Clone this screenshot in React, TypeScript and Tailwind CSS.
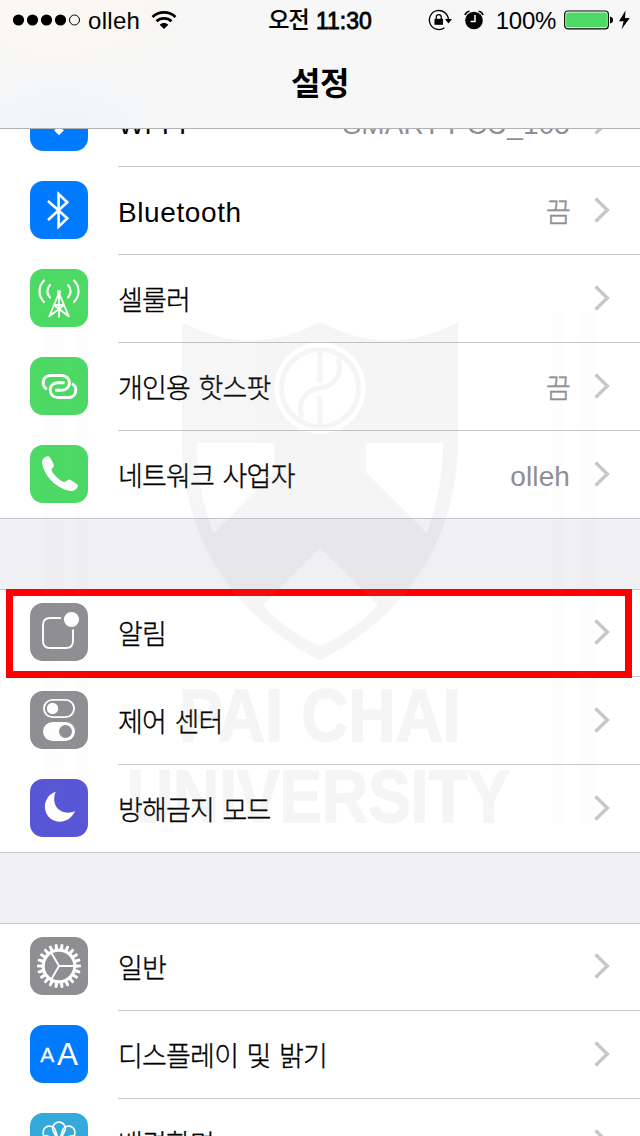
import type { ReactNode } from "react";

const FONT = "font-['Liberation_Sans','Noto_Sans_CJK_KR',sans-serif]";

function Tile({ color, children }: { color: string; children: ReactNode }) {
  return (
    <svg viewBox="0 0 58 58" className={`size-[58px] rounded-[13px] ${color}`} fill="none" stroke="white">
      {children}
    </svg>
  );
}

const wifi = (
  <Tile color="bg-[#007aff]">
    <path d="M29 42.300l-5-5c2.600-2.800 7.400-2.800 10 0z" fill="white" stroke="none" />
    <path d="M18.500 31.500c6-6 15-6 21 0M12.500 25.500c9-9 24-9 33 0" strokeWidth="4" />
  </Tile>
);

const bluetooth = (
  <Tile color="bg-[#007aff]">
    <path d="M18 20L37.300 37.300L28.600 45.600V13L37.300 21.300L18 39" strokeWidth="2.600" />
  </Tile>
);

const cellular = (
  <Tile color="bg-[#4cd964]">
    <g strokeWidth="2.200" strokeLinecap="round">
      <path d="M14 11.500c-6 6-6 15.500 0 21.500M44 11.500c6 6 6 15.500 0 21.500M20 16c-3.500 3.500-3.500 9 0 12.500M38 16c3.500 3.500 3.500 9 0 12.500" />
    </g>
    <path d="M29 24L19 48M29 24L39 48M29 23V48.500M24.500 36H33.500M19 47.500L33 37M39 47.500L25 37" strokeWidth="1.800" />
    <circle cx="29" cy="23" r="2" fill="white" stroke="none" />
  </Tile>
);

const hotspot = (
  <Tile color="bg-[#4cd964]">
    <g strokeWidth="2.900">
      <path d="M17 32.300C10.500 28.500 12.500 18.500 21 18.500H31.500C42 18.500 42 33.300 31.500 33.300H25" />
      <path d="M34.500 25.700H28C17.500 25.700 17.500 40.500 28 40.500H38C46.500 40.500 48.500 30.500 42 26.700" />
    </g>
  </Tile>
);

const phone = (
  <Tile color="bg-[#4cd964]">
    <path
      d="M18.500 11.200C16 10.600 11.600 14 12 17.200C13.500 31 27 43.800 40.500 46C44 46.500 47.700 43.500 48 40.500C48 39.700 41.200 35 39.300 34.500C38 34.200 35.300 37.300 33.500 37C30.500 36.300 22.200 28.200 21.600 25.300C21.300 23.800 24.200 21.500 24 20.200C23.700 18.500 20 11.500 18.500 11.200Z"
      fill="white"
      stroke="none"
    />
  </Tile>
);

const notification = (
  <Tile color="bg-[#8e8e93]">
    <path d="M31 15H20Q13 15 13 22V38Q13 45 20 45H36Q43 45 43 38V26.500" strokeWidth="1.900" />
    <circle cx="41.500" cy="16.500" r="7.600" fill="white" stroke="none" />
  </Tile>
);

const control = (
  <Tile color="bg-[#8e8e93]">
    <rect x="13.900" y="8.900" width="30.200" height="17.200" rx="8.600" strokeWidth="1.800" />
    <circle cx="22.500" cy="17.500" r="5.700" fill="white" stroke="none" />
    <rect x="13" y="31" width="32" height="19" rx="9.500" fill="white" stroke="none" />
    <circle cx="35.500" cy="40.500" r="6.500" fill="#8e8e93" stroke="none" />
  </Tile>
);

const moon = (
  <Tile color="bg-[#5856d6]">
    <path d="M25.700 12.800C12 17 11 37 25 42C34 44.500 42 39.500 45 32C34 37.500 19.500 29 25.700 12.800Z" fill="white" stroke="none" />
  </Tile>
);

const general = (
  <Tile color="bg-[#8e8e93]">
    <circle cx="29" cy="29" r="15.700" strokeWidth="2.900" />
    {Array.from({ length: 22 }, (_, i) => (
      <path
        key={i}
        d="M45.300 27.200L51 27.700V30.300L45.300 30.800Z"
        fill="white"
        stroke="none"
        transform={`rotate(${(i * 360) / 22} 29 29)`}
      />
    ))}
    <path d="M29 29H44M29 29L21.500 16M29 29L21.500 42" strokeWidth="1.900" />
  </Tile>
);

const display = (
  <Tile color="bg-[#007aff]">
    <g fill="white" stroke="none" className="font-['Liberation_Sans',sans-serif]">
      <text x="10.200" y="37.400" fontSize="21" stroke="white" strokeWidth="0.300">A</text>
      <text x="27" y="39.700" fontSize="31.500">A</text>
    </g>
  </Tile>
);

const wallpaper = (
  <Tile color="bg-[#34aadc]">
    <g strokeWidth="1.700">
      {Array.from({ length: 8 }, (_, i) => (
        <path key={i} d="M29 29L23.800 19A6.300 6.300 0 1 1 34.200 19Z" transform={`rotate(${i * 45} 29 29)`} />
      ))}
    </g>
  </Tile>
);

function Chevron() {
  return (
    <svg viewBox="0 0 18 28" className="mr-[30px] ml-[22px] h-7 w-[18px] -translate-y-px shrink-0" fill="none">
      <path d="M3.500 2.500L15.300 14L3.500 25.500" stroke="#c7c7cc" strokeWidth="3.500" />
    </svg>
  );
}

type Item = { icon: ReactNode; label: string; value?: string };

const LATIN_LABEL = "pt-[5px] text-[28px] tracking-[0.6px]";
const LATIN_VALUE = "pt-[5px] text-[28px] tracking-[0.1px]";
const HANGUL_TEXT = "pt-[6px] text-[27px] font-light tracking-[-0.8px] [word-spacing:1.7px] [-webkit-text-stroke:0.35px_currentColor]";

const isLatin = (text: string) => /^[\x20-\x7e]+$/.test(text);

function Row({ icon, label, value, last }: Item & { last: boolean }) {
  return (
    <div className={`flex h-[88px] shrink-0 bg-white ${last ? "border-b border-[#c8c7cc]" : ""}`}>
      <div className="w-[118px] shrink-0 pt-[14px] pl-[30px]">{icon}</div>
      <div className={`flex flex-1 items-center whitespace-nowrap ${last ? "" : "border-b border-[#c8c7cc]"}`}>
        <span className={`flex-1 text-black ${isLatin(label) ? LATIN_LABEL : HANGUL_TEXT}`}>{label}</span>
        {value && <span className={`text-[#8e8e93] ${isLatin(value) ? LATIN_VALUE : HANGUL_TEXT}`}>{value}</span>}
        <Chevron />
      </div>
    </div>
  );
}

const groups: Item[][] = [
  [
    { icon: wifi, label: "Wi-Fi", value: "SMART PCU_105" },
    { icon: bluetooth, label: "Bluetooth", value: "끔" },
    { icon: cellular, label: "셀룰러" },
    { icon: hotspot, label: "개인용 핫스팟", value: "끔" },
    { icon: phone, label: "네트워크 사업자", value: "olleh" },
  ],
  [
    { icon: notification, label: "알림" },
    { icon: control, label: "제어 센터" },
    { icon: moon, label: "방해금지 모드" },
  ],
  [
    { icon: general, label: "일반" },
    { icon: display, label: "디스플레이 및 밝기" },
    { icon: wallpaper, label: "배경화면" },
  ],
];

function StatusBar() {
  return (
    <div className="flex h-10 items-center justify-between pr-[8px] pl-[13px] text-[24px] text-black">
      <div className="flex w-[240px] items-center">
        <svg viewBox="0 0 68 12" className="h-3 w-[68px]">
          {[5.5, 19.5, 33.5, 47.5].map((x) => (
            <circle key={x} cx={x} cy="6" r="5.600" />
          ))}
          <circle cx="61.500" cy="6" r="5" fill="none" stroke="black" />
        </svg>
        <span className="ml-[7px] pt-[2px] tracking-[0.3px]">olleh</span>
        <svg viewBox="0 0 26 20" className="ml-[11px] h-5 w-[26px]" fill="none" stroke="black" strokeWidth="2.800">
          <path d="M1.500 7C8 .9 18 .9 24.500 7M5.500 11.300C9.500 7.500 16.500 7.500 20.500 11.300" />
          <path d="M13 19L8.700 14.800C11 12.500 15 12.500 17.300 14.800Z" fill="black" stroke="none" />
        </svg>
      </div>
      <div className="-ml-[5px] flex items-center gap-[7px]">
        <span className="pt-px text-[23px] font-medium tracking-[-0.8px] [-webkit-text-stroke:0.2px_black]">오전</span>
        <span className="pt-[2px] text-[23px] tracking-[0px] [-webkit-text-stroke:0.8px_black]">11:30</span>
      </div>
      <div className="flex w-[240px] items-center justify-end">
        <svg viewBox="0 0 24 22" className="h-[22px] w-6" fill="none" stroke="black">
          <path d="M16.500 18.700A9.500 9.500 0 1 1 20.400 11" strokeWidth="1.300" />
          <path d="M17 10H24L20.500 14.500Z" fill="black" stroke="none" />
          <rect x="6.500" y="9.800" width="8.500" height="6" fill="black" stroke="none" />
          <path d="M8.300 10V8C8.300 4.800 13.200 4.800 13.200 8V10" strokeWidth="1.300" />
        </svg>
        <svg viewBox="0 0 20 20" className="ml-3 size-5">
          <circle cx="10" cy="10.500" r="8.800" />
          <path d="M1 5C1.500 3 3.500 1.500 5.500 1.200M19 5C18.500 3 16.500 1.500 14.500 1.200" fill="none" stroke="black" strokeWidth="1.600" />
          <path d="M11 5V11.500H6.500" fill="none" stroke="white" strokeWidth="1.500" />
        </svg>
        <span className="ml-3 pt-[2px] text-[24px] tracking-[-0.3px]">100%</span>
        <svg viewBox="0 0 68 22" className="ml-2 h-[22px] w-[68px]">
          <rect x=".7" y="2" width="43.600" height="17.800" rx="3" fill="white" stroke="black" strokeWidth="1.200" />
          <rect x="2.100" y="3.500" width="40.800" height="14.800" rx="1.500" fill="#4cd964" />
          <path d="M46 7.500Q49 8 49 11Q49 14 46 14.500Z" />
          <path d="M61.500 1.500L55 12.200H59.700L57.500 20.200L65.800 9H61Z" />
        </svg>
      </div>
    </div>
  );
}

function Watermark() {
  return (
    <svg viewBox="0 0 640 1136" className="pointer-events-none absolute inset-0 z-20 h-full w-full">
      <g fill="#909090" fillOpacity="0.02">
        <path d="M45 312H63V824H45ZM77 312H87V824H77ZM553 312H563V824H553ZM577.500 312H596V824H577.500Z" />
      </g>
      <g fill="#909090" opacity="0.082">
        <path
          fillRule="evenodd"
          d="M182 322Q251 359 320 322Q389 359 458 322V440C458 535 410 614 320 660.500C230 614 182 535 182 440ZM196.700 443H274.500V472L213.700 533.500C203 507 197 475 196.700 443ZM443.300 443H366V472.500L426.500 533C437 507 443 475 443.300 443ZM320.300 548L263 605C278 623 298 636 320 646.500C342 636 362 623 378 605ZM274.200 388A45.800 45.800 0 1 0 365.800 388A45.800 45.800 0 1 0 274.200 388Z"
        />
        <g fill="none" stroke="#909090" strokeWidth="5">
          <circle cx="320" cy="388" r="38.500" />
          <path d="M320 351V382M320 396V425" />
          <path d="M337.500 358.500C341 366 340 374 336 379.500C331 386 326 386.500 320 388C314 389.500 309 390 304 396.500C300 402 299 410 302.500 417.500" />
        </g>
        <g className="font-['Liberation_Sans_Narrow','Liberation_Sans',sans-serif] font-bold" fontSize="75" stroke="#909090" strokeWidth="1.500">
          <text x="179" y="740.500" textLength="282" lengthAdjust="spacingAndGlyphs">PAI CHAI</text>
          <text x="127" y="821.500" textLength="383" lengthAdjust="spacingAndGlyphs">UNIVERSITY</text>
        </g>
      </g>
    </svg>
  );
}

export default function App() {
  return (
    <div className={`relative flex h-[1136px] w-[640px] flex-col overflow-hidden bg-[#efeff4] ${FONT}`}>
      <header className="relative z-10 h-[129px] shrink-0 border-b border-[#b2b2b2] bg-[#f7f7f7] bg-[radial-gradient(ellipse_130px_70px_at_60px_10px,#fbf8f1,transparent),radial-gradient(ellipse_110px_60px_at_60px_128px,#eff4fb,transparent)]">
        <StatusBar />
        <h1 className="flex h-[88px] items-center justify-center text-[32px] font-bold tracking-[-0.5px] text-black">설정</h1>
      </header>
      <main className="-mt-[50px] flex flex-col">
        {groups.map((items, g) => (
          <section key={g} className="flex flex-col">
            {g > 0 && <div className="relative -mb-px h-[71px] shrink-0 border-b border-[#c8c7cc] bg-[#efeff4]" />}
            {items.map((item, i) => (
              <Row key={item.label} {...item} last={i === items.length - 1} />
            ))}
          </section>
        ))}
      </main>
      <div className="absolute top-[589px] left-[6px] z-10 h-[89px] w-[626px] border-7 border-[#ff0000]" />
      <Watermark />
    </div>
  );
}
